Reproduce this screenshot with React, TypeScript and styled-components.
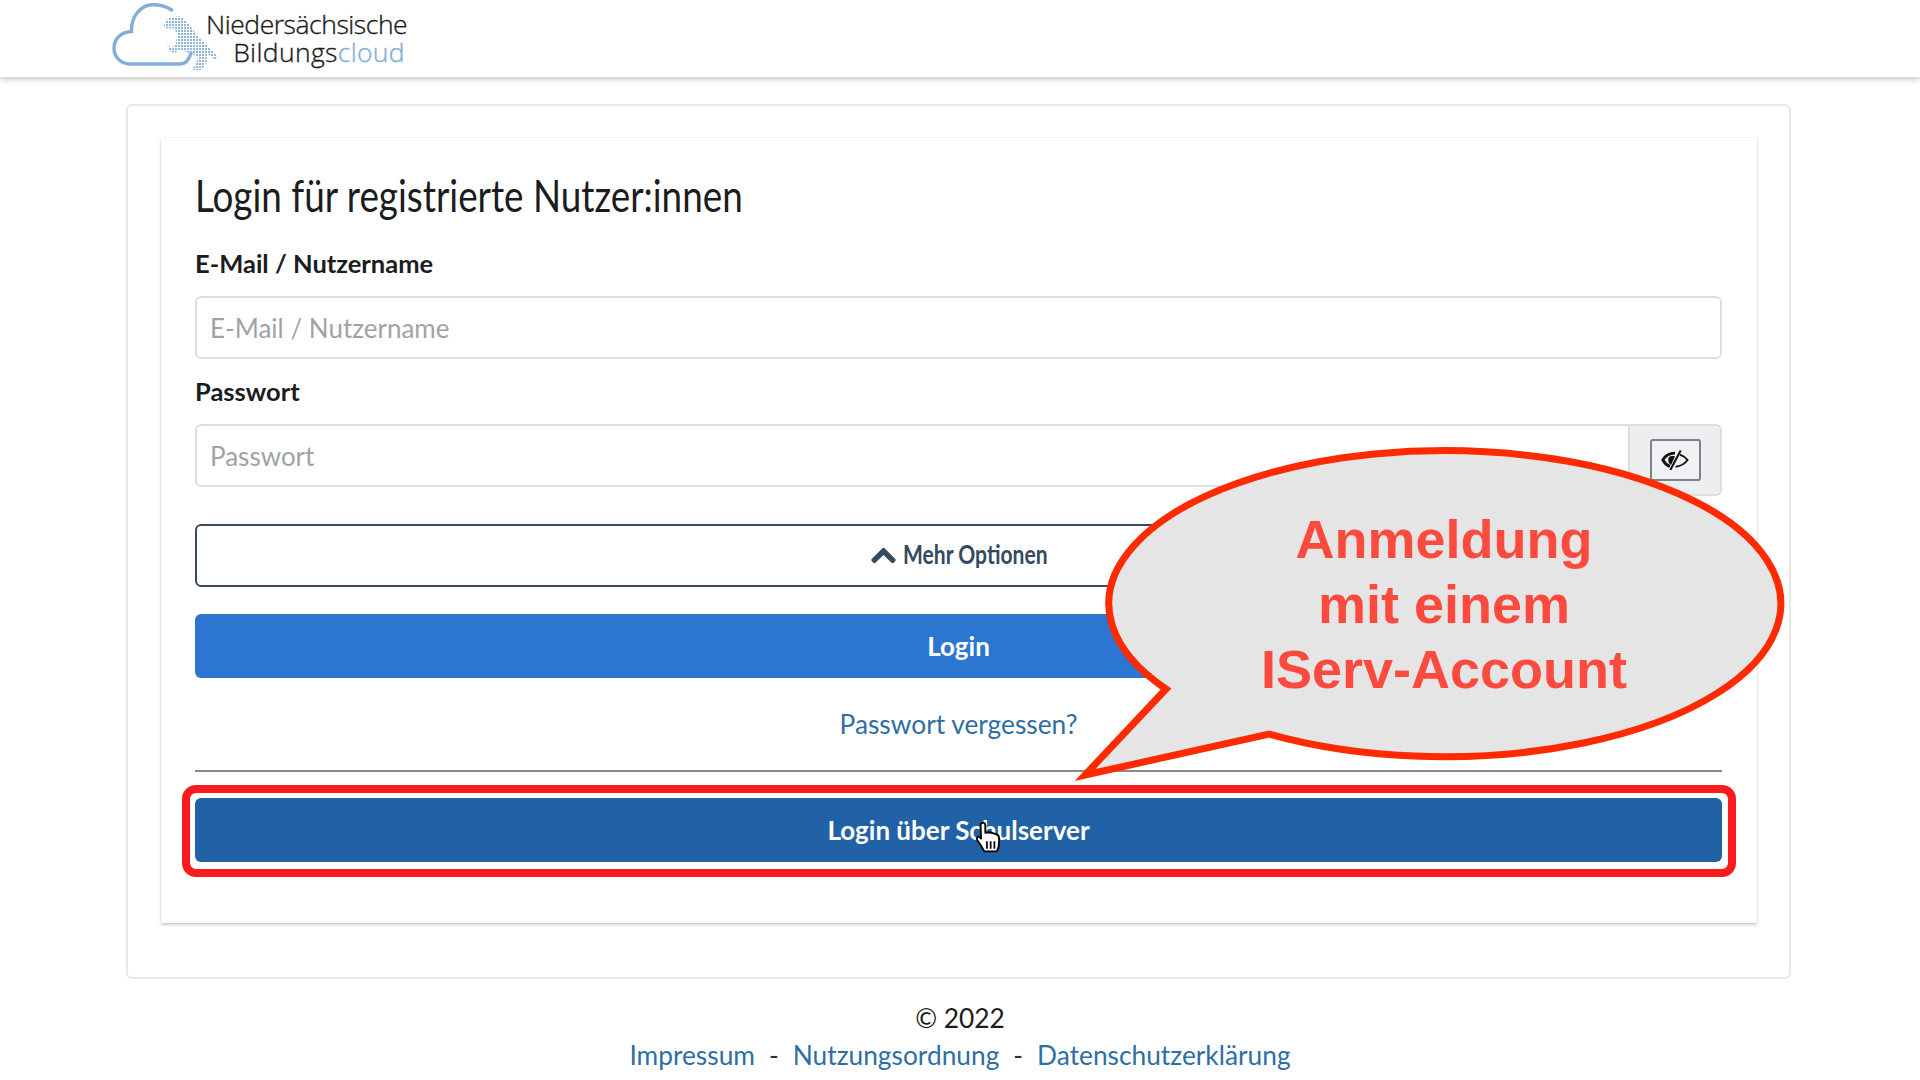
import React from "react";
import styled, { createGlobalStyle } from "styled-components";
import { FaChevronUp } from "react-icons/fa";

const Global = createGlobalStyle`
  html, body { margin: 0; padding: 0; background: #fff; }
  body { width: 1920px; height: 1080px; overflow: hidden; font-family: "Lato", "Noto Sans", sans-serif; color: #1b1c1e; }
  * { box-sizing: border-box; }
`;

const Page = styled.div`
  position: relative;
  width: 1920px;
  height: 1080px;
  overflow: hidden;
`;
const Header = styled.header`
  height: 77px;
  background: #fff;
  box-shadow: 0 2px 6px rgba(0, 0, 0, 0.25);
  padding-left: 112px;
  display: flex;
  align-items: flex-start;
`;
const LogoMark = styled.svg`
  width: 108px;
  height: 72px;
  flex: none;
`;
const LogoText = styled.div`
  margin-left: -14px;
  width: 199px;
  padding-top: 10px;
  font-family: "Open Sans", sans-serif;
  font-weight: 300;
  font-size: 26.5px;
  line-height: 28px;
  letter-spacing: -0.45px;
  text-align: right;
  color: #1a1a1a;
  white-space: nowrap;
  -webkit-text-stroke: 0.35px #1a1a1a;
`;
const LogoLine = styled.div`
  letter-spacing: 0.35px;
`;
const Cloud = styled.span`
  color: #82aed8;
  -webkit-text-stroke: 0.35px #82aed8;
`;
const Outer = styled.main`
  margin: 27px 129px 0 126px;
  height: 875px;
  border: 2px solid #e7e8e9;
  border-radius: 6px;
  padding: 32px 32px 32px 33px;
`;
const Inner = styled.section`
  height: 785px;
  padding: 29px 35px 0 34px;
  background: #fff;
  box-shadow: 0 2px 3px rgba(0, 0, 0, 0.18), 0 0 2px rgba(0, 0, 0, 0.1);
`;
const Title = styled.h1`
  margin: 0 0 25px;
  font-family: "Lato", sans-serif;
  font-weight: 400;
  font-size: 45px;
  line-height: 56px;
  color: #1b1c1e;
  white-space: nowrap;
  transform: scaleX(0.818);
  transform-origin: left center;
`;
const Label = styled.label`
  display: block;
  font-weight: 700;
  font-size: 25.5px;
  line-height: 30px;
  margin-bottom: 18px;
  color: #1b1c1e;
`;
const Field = styled.div`
  height: 63px;
  border: 2px solid #dcdee0;
  border-radius: 6px;
  padding-left: 13px;
  display: flex;
  align-items: center;
  font-size: 26px;
  color: #a0a3a6;
  background: #fff;
  margin-bottom: 17px;
`;
const PasswordRow = styled.div`
  display: flex;
  align-items: flex-start;
  height: 72px;
  margin-bottom: 28px;
`;
const PasswordField = styled(Field)`
  flex: 1;
  margin: 0;
  border-radius: 6px 0 0 6px;
  border-right: none;
`;
const Addon = styled.div`
  width: 94px;
  height: 72px;
  background: #eceef0;
  border: 2px solid #dcdee0;
  border-radius: 0 6px 6px 0;
  display: flex;
  align-items: center;
  justify-content: center;
`;
const EyeButton = styled.div`
  width: 51px;
  height: 42px;
  border: 2px solid #7f8286;
  border-radius: 3px;
  background: #f1f2f3;
  display: flex;
  align-items: center;
  justify-content: center;
`;
const MoreButton = styled.div`
  height: 63px;
  border: 2px solid #3a4a5c;
  border-radius: 6px;
  display: flex;
  align-items: center;
  justify-content: center;
  gap: 6px;
  margin-bottom: 27px;
  color: #34495e;
  background: #fff;
`;
const Chevron = styled(FaChevronUp)`
  stroke: currentColor;
  stroke-width: 24;
`;
const MoreLabel = styled.span`
  display: inline-block;
  width: 145px;
  margin-top: -4px;
  font-weight: 700;
  font-size: 26px;
  white-space: nowrap;
  transform: scaleX(0.81);
  transform-origin: left center;
`;
const PrimaryButton = styled.div<{ $bg: string }>`
  height: 64px;
  border-radius: 6px;
  display: flex;
  align-items: center;
  justify-content: center;
  background: ${(p) => p.$bg};
  color: #fff;
  font-weight: 700;
  font-size: 26px;
`;
const ForgotRow = styled.div`
  margin: 31px 0 31px;
  text-align: center;
  line-height: 30px;
  font-size: 26.3px;
`;
const Link = styled.a`
  color: #2f6ea5;
  text-decoration: none;
`;
const Rule = styled.hr`
  margin: 0 0 26px;
  border: none;
  height: 2px;
  background: #8a8a8a;
`;
const SchoolWrap = styled.div`
  position: relative;
`;
const RedFrame = styled.div`
  position: absolute;
  left: -13px;
  right: -14px;
  top: -13px;
  bottom: -15px;
  border: 8px solid #fb1a1e;
  border-radius: 14px;
  pointer-events: none;
`;
const Pointer = styled.svg`
  position: absolute;
  left: 780px;
  top: 23px;
  width: 26px;
  height: 32px;
`;
const Footer = styled.footer`
  margin-top: 24px;
  text-align: center;
  font-size: 26.3px;
  line-height: 30px;
`;
const FooterLinks = styled.div`
  margin-top: 7px;
  display: flex;
  justify-content: center;
  gap: 14px;
  color: #333;
  font-size: 26.3px;
`;
const Bubble = styled.svg`
  position: absolute;
  left: 1060px;
  top: 430px;
  width: 740px;
  height: 360px;
  pointer-events: none;
`;
const BubbleText = styled.text`
  font-family: "Liberation Sans", Arial, sans-serif;
  font-weight: 700;
  font-size: 54px;
  fill: #fd4a3f;
  text-anchor: middle;
`;

export default function App() {
  return (
    <Page>
      <Global />
      <Header>
        <LogoMark viewBox="0 0 108 72">
          <defs>
            <pattern id="dots" width="3" height="3" patternUnits="userSpaceOnUse">
              <rect width="2" height="2" fill="#8fb5d9" />
            </pattern>
          </defs>
          <path
            d="M59.7 10 C54 6 47 4.7 41 4.7 C29 4.7 19 16 19.5 31.5 C9 32 2 39 2 48 C2 57 9 64 18 64 L68 64 C73 64 77 60 79 53"
            fill="none"
            stroke="#82aed8"
            strokeWidth="3.4"
            strokeLinecap="round"
          />
          <path
            d="M52 25 L56.3 18.3 L68 16 L76.3 23.3 L84.7 35 L94.7 45 L106.3 56.7 L103 60 L94.7 53.3 L94.7 61.7 L89.7 70 L79.7 70 L84.7 61.7 L86.3 56.7 L78 53.3 L68 50 L63 52.7 L58 51.7 L54.7 43.3 L59.7 48.3 L64 43.3 L65.3 33.3 L61.3 28.3 L53 28.3 Z"
            fill="url(#dots)"
          />
        </LogoMark>
        <LogoText>
          Niedersächsische
          <LogoLine>
            Bildungs<Cloud>cloud</Cloud>
          </LogoLine>
        </LogoText>
      </Header>
      <Outer>
        <Inner>
          <Title>Login für registrierte Nutzer:innen</Title>
          <Label>E-Mail / Nutzername</Label>
          <Field>E-Mail / Nutzername</Field>
          <Label>Passwort</Label>
          <PasswordRow>
            <PasswordField>Passwort</PasswordField>
            <Addon>
              <EyeButton>
                <svg width="28" height="22" viewBox="0 0 28 22">
                  <path
                    d="M14 4.2 C8.6 4.2 4 7 1.8 11 C3.4 14 5.6 16.2 9 17.4"
                    fill="none"
                    stroke="#111"
                    strokeWidth="2.8"
                  />
                  <path d="M8 8.2 C6.6 11 7.4 14.4 10 16 L14 7.6 C12 6.8 9.4 7 8 8.2 Z" fill="#111" />
                  <path d="M18.8 1 L20.6 2 L10.2 21.4 L8.4 20.4 Z" fill="#111" />
                  <path
                    d="M19 5.6 C22.2 6.8 24.8 8.6 26.6 11 C23.8 14.8 19.6 17.2 14.6 17.8"
                    fill="none"
                    stroke="#111"
                    strokeWidth="1.9"
                  />
                </svg>
              </EyeButton>
            </Addon>
          </PasswordRow>
          <MoreButton>
            <Chevron size={27} color="#34495e" />
            <MoreLabel>Mehr Optionen</MoreLabel>
          </MoreButton>
          <PrimaryButton $bg="#2c76d2">Login</PrimaryButton>
          <ForgotRow>
            <Link>Passwort vergessen?</Link>
          </ForgotRow>
          <Rule />
          <SchoolWrap>
            <PrimaryButton $bg="#2161a6">Login über Schulserver</PrimaryButton>
            <RedFrame />
            <Pointer viewBox="0 0 24 30">
              <path
                d="M6 2 C8 1 9.5 2 9.5 4 L9.5 11 L12 10.5 L15 11 L18 11.8 L21 13 C22.5 14 22.5 16 22.5 18 L22 24 L20.5 28.5 L8.5 28.5 L6 24 L2 18 C0.8 16 2.2 14 4 15 L5.5 16.5 L5 4 C5 3 5.4 2.4 6 2 Z"
                fill="#fff"
                stroke="#000"
                strokeWidth="1.8"
                strokeLinejoin="round"
              />
              <path d="M11 19 V26 M14.5 19 V26 M18 19 V26" stroke="#000" strokeWidth="1.6" />
            </Pointer>
          </SchoolWrap>
        </Inner>
      </Outer>
      <Footer>
        © 2022
        <FooterLinks>
          <Link>Impressum</Link>-<Link>Nutzungsordnung</Link>-<Link>Datenschutzerklärung</Link>
        </FooterLinks>
      </Footer>
      <Bubble viewBox="1060 430 740 360">
        <path
          d="M1166 689 A336 153 0 1 1 1269 734 L1085 775 Z"
          fill="#e5e5e5"
          stroke="#ff2a00"
          strokeWidth="7"
          strokeLinejoin="miter"
        />
        <BubbleText x="1444" y="558">Anmeldung</BubbleText>
        <BubbleText x="1444" y="623">mit einem</BubbleText>
        <BubbleText x="1444" y="688">IServ-Account</BubbleText>
      </Bubble>
    </Page>
  );
}
